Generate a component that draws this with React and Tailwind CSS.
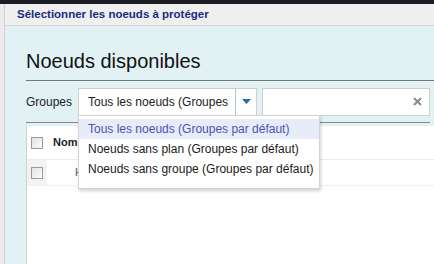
import React from "react"

const options = [
  "Tous les noeuds (Groupes par défaut)",
  "Noeuds sans plan (Groupes par défaut)",
  "Noeuds sans groupe (Groupes par défaut)",
]

function Checkbox() {
  return <div className="w-[12px] h-[12px] border border-[#9a9a9a] bg-gradient-to-br from-[#e4e4e4] to-[#fafafa]" />
}

export default function App() {
  return (
    <div className="w-[434px] h-[264px] overflow-hidden bg-white flex flex-col text-[#222]" style={{ fontFamily: '"Liberation Sans", Arial, sans-serif' }}>
      <div className="h-[4px] bg-[#1c1c24] shrink-0" />
      <div className="flex flex-1 min-h-0">
        <div className="w-[5px] bg-[#ebebeb] border-r border-[#d0d0d0]" />
        <div className="flex-1 flex flex-col min-w-0">
          <div className="h-[22px] shrink-0 bg-[#efefef] border-b border-[#d6d6d6] pl-[12px] flex items-center">
            <span className="text-[11.5px] font-bold text-[#1e2a80]">Sélectionner les noeuds à protéger</span>
          </div>
          <div className="flex-1 bg-[#e1f1f4] pl-[21px] flex flex-col min-h-0">
            <div className="h-[55px] shrink-0 border-b border-[#777] flex items-end pb-[7px]">
              <span className="text-[20px] leading-[24px] text-[#111]">Noeuds disponibles</span>
            </div>
            <div className="relative h-[42px] shrink-0 border-b border-[#888] mr-[4px] flex items-center">
              <span className="text-[12px] w-[52px]">Groupes</span>
              <div className="h-[28px] w-[179px] flex bg-white border border-[#cfcfcf]">
                <div className="flex-1 flex items-center pl-[9px] pr-[6px] min-w-0">
                  <div className="text-[12px] overflow-hidden whitespace-nowrap">Tous les noeuds (Groupes par défaut)</div>
                </div>
                <div className="w-[21px] border-l border-[#a9c6dd] flex items-center justify-center">
                  <svg width="9" height="5" viewBox="0 0 9 5"><path d="M0 0h9L4.5 5z" fill="#1f6db3" /></svg>
                </div>
              </div>
              <div className="h-[28px] flex-1 ml-[5px] bg-white border border-[#cfcfcf] flex items-center justify-end pr-[7px]">
                <svg width="9" height="9" viewBox="0 0 9 9"><path d="M1 1l7 7M8 1L1 8" stroke="#8a8a8a" strokeWidth="2" /></svg>
              </div>
              <div className="absolute left-[52px] top-[34px] w-[242px] h-[74px] pt-[3px] bg-white border border-[#d4d4d4] shadow-[1px_2px_3px_rgba(0,0,0,0.18)] z-10 flex flex-col">
                {options.map((o, i) => (
                  <div key={o} className={`h-[20px] shrink-0 flex items-center pl-[9px] text-[12px] whitespace-nowrap ${i === 0 ? "bg-[#e8ebf8] text-[#4a55b5]" : "text-[#1a1a1a]"}`}>{o}</div>
                ))}
              </div>
            </div>
            <div className="flex-1 mt-[3px] bg-white border-l border-[#cfcfcf]">
              <div className="h-[34px] flex items-center pl-[4px] border-b border-[#ececec]">
                <Checkbox />
                <span className="ml-[10px] text-[11px] font-bold">Nom</span>
              </div>
              <div className="h-[26px] flex items-center border-b border-[#f0f0f0]">
                <div className="w-[20px] h-full bg-[#f3f3f3] flex items-center justify-center"><Checkbox /></div>
                <span className="ml-[28px] text-[11px] text-[#555]">H</span>
              </div>
            </div>
          </div>
        </div>
      </div>
    </div>
  )
}
